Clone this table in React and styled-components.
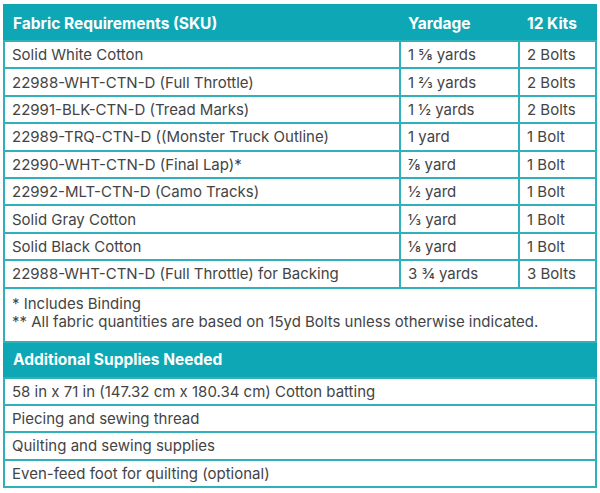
import styled, { createGlobalStyle } from "styled-components";

const GlobalStyle = createGlobalStyle`
  body {
    margin: 0;
    background: #fff;
    font-family: Inter, "Noto Sans", sans-serif;
  }
`;

const Wrapper = styled.div`
  padding: 4px 5px 0 3px;
`;

const Table = styled.table`
  width: 592px;
  border-collapse: collapse;
  border: 2px solid #14a3b0;
  table-layout: fixed;
  color: #444;
`;

const HeadCell = styled.th`
  background: #0ea7b5;
  color: #fff;
  font-weight: 700;
  font-size: 15.5px;
  text-align: left;
  height: 34px;
  padding: 0 8px;
  border: none;
`;

const Cell = styled.td`
  border: 2px solid #2fb0bb;
  font-size: 15px;
  height: 25.4px;
  padding: 0 7px;
  white-space: nowrap;
`;

const Note = styled.td`
  border: 2px solid #2fb0bb;
  font-size: 15px;
  padding: 6px 7px 10px;
  line-height: 18px;
`;

const fabrics = [
  ["Solid White Cotton", "1 ⅝ yards", "2 Bolts"],
  ["22988-WHT-CTN-D (Full Throttle)", "1 ⅔ yards", "2 Bolts"],
  ["22991-BLK-CTN-D (Tread Marks)", "1 ½ yards", "2 Bolts"],
  ["22989-TRQ-CTN-D ((Monster Truck Outline)", "1 yard", "1 Bolt"],
  ["22990-WHT-CTN-D (Final Lap)*", "⅞ yard", "1 Bolt"],
  ["22992-MLT-CTN-D (Camo Tracks)", "½ yard", "1 Bolt"],
  ["Solid Gray Cotton", "⅓ yard", "1 Bolt"],
  ["Solid Black Cotton", "⅛ yard", "1 Bolt"],
  ["22988-WHT-CTN-D (Full Throttle) for Backing", "3 ¾ yards", "3 Bolts"],
];

const supplies = [
  "58 in x 71 in (147.32 cm x 180.34 cm) Cotton batting",
  "Piecing and sewing thread",
  "Quilting and sewing supplies",
  "Even-feed foot for quilting (optional)",
];

export default function App() {
  return (
    <Wrapper>
      <GlobalStyle />
      <Table>
        <colgroup>
          <col style={{ width: 396 }} />
          <col style={{ width: 119 }} />
          <col style={{ width: 77 }} />
        </colgroup>
        <thead>
          <tr>
            <HeadCell>Fabric Requirements (SKU)</HeadCell>
            <HeadCell>Yardage</HeadCell>
            <HeadCell>12 Kits</HeadCell>
          </tr>
        </thead>
        <tbody>
          {fabrics.map((f) => (
            <tr key={f[0] + f[1]}>
              <Cell>{f[0]}</Cell>
              <Cell>{f[1]}</Cell>
              <Cell>{f[2]}</Cell>
            </tr>
          ))}
          <tr>
            <Note colSpan={3}>
              * Includes Binding
              <br />
              ** All fabric quantities are based on 15yd Bolts unless otherwise indicated.
            </Note>
          </tr>
          <tr>
            <HeadCell colSpan={3}>Additional Supplies Needed</HeadCell>
          </tr>
          {supplies.map((s) => (
            <tr key={s}>
              <Cell colSpan={3}>{s}</Cell>
            </tr>
          ))}
        </tbody>
      </Table>
    </Wrapper>
  );
}
